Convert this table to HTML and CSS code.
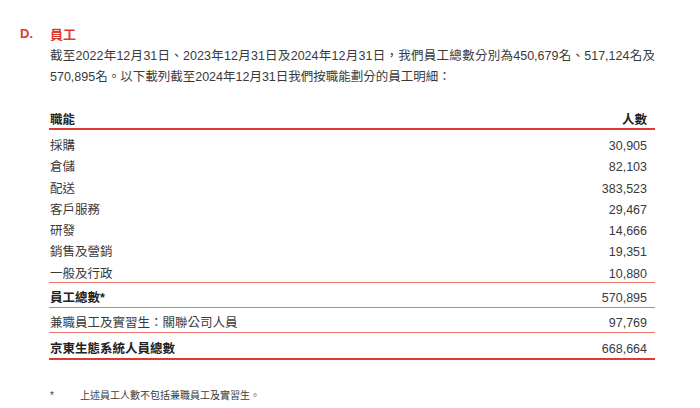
FILE: index.html
```html
<!DOCTYPE html>
<html lang="zh-Hant">
<head>
  <meta charset="UTF-8" />
  <title>員工</title>
  <link rel="stylesheet" href="styles.css">
</head>
<body>
  <div class="page">
    <div class="heading">
      <span class="letter">D.</span>
      <span class="title">員工</span>
    </div>

    <div class="content">
      <p class="intro">
        <span class="line full">截至2022年12月31日、2023年12月31日及2024年12月31日，我們員工總數分別為450,679名、517,124名及</span>
        <span class="line">570,895名。以下載列截至2024年12月31日我們按職能劃分的員工明細：</span>
      </p>

      <div class="staff-table">
        <div class="row head-row">
          <span>職能</span>
          <span>人數</span>
        </div>

        <div class="group">
          <div class="row"><span>採購</span><span class="num">30,905</span></div>
          <div class="row"><span>倉儲</span><span class="num">82,103</span></div>
          <div class="row"><span>配送</span><span class="num">383,523</span></div>
          <div class="row"><span>客戶服務</span><span class="num">29,467</span></div>
          <div class="row"><span>研發</span><span class="num">14,666</span></div>
          <div class="row"><span>銷售及營銷</span><span class="num">19,351</span></div>
          <div class="row"><span>一般及行政</span><span class="num">10,880</span></div>
        </div>

        <div class="row sum bold"><span>員工總數*</span><span class="num">570,895</span></div>
        <div class="row sum"><span>兼職員工及實習生：關聯公司人員</span><span class="num">97,769</span></div>
        <div class="row sum bold last"><span>京東生態系統人員總數</span><span class="num">668,664</span></div>
      </div>

      <div class="note">
        <span class="mark">*</span>
        <span>上述員工人數不包括兼職員工及實習生。</span>
      </div>
    </div>
  </div>
</body>
</html>
```

FILE: styles.css
```css
body {
  margin: 0;
  background-color: #fff;
  color: #3a3a3a;
  font-family: "Liberation Sans", "Noto Sans CJK TC", sans-serif;
}

.page {
  padding-top: 23px;
}

.heading {
  display: flex;
  align-items: center;
  height: 20px;
  padding-left: 20px;
  color: #e03a2f;
  font-weight: bold;
}

.letter {
  width: 30px;
  font-size: 13px;
}

.title {
  font-size: 13px;
}

.content {
  margin-left: 50px;
  width: 605px;
}

.intro {
  margin: 3px 0 0;
  font-size: 12.5px;
  line-height: 21px;
}

.intro .line {
  display: block;
}

.intro .full {
  text-align: justify;
  text-align-last: justify;
}

.staff-table {
  margin-top: 20px;
  margin-left: -1px;
  font-size: 12.5px;
}

.row {
  display: flex;
  justify-content: space-between;
  padding: 0 8px 0 1px;
}

.head-row {
  line-height: 16px;
  padding-top: 4px;
  font-weight: bold;
  color: #222;
  border-bottom: 2px solid #e03a2f;
}

.group {
  padding-top: 6px;
  border-bottom: 1px solid #e8766e;
}

.group .row {
  height: 21.3px;
  line-height: 21.3px;
}

.group .row:last-child {
  height: 18.5px;
}

.sum {
  padding-top: 6px;
  line-height: 18px;
  border-bottom: 1px solid #e8766e;
}

.bold {
  font-weight: bold;
  color: #222;
}

.bold .num {
  font-weight: normal;
  color: #3a3a3a;
}

.last {
  padding-top: 7px;
  border-bottom: 2px solid #e03a2f;
}

.note {
  display: flex;
  margin-top: 29px;
  font-size: 10px;
  line-height: 14px;
}

.note .mark {
  width: 30px;
}
```
